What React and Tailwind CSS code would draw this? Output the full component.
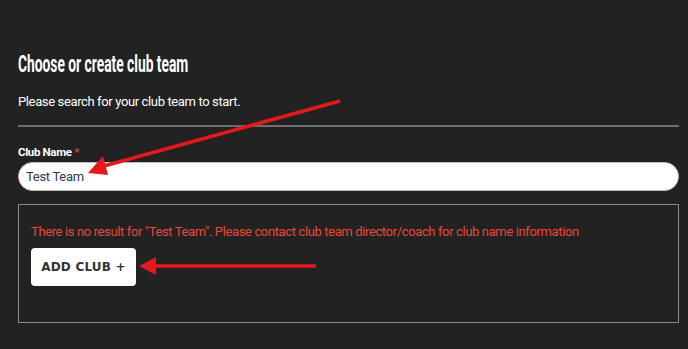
export default function App() {
  return (
    <div className="relative w-full h-[349px] bg-[#222222] overflow-hidden pl-[18px] pr-[9px] pt-[53px]" style={{ fontFamily: "Roboto, 'Liberation Sans', sans-serif" }}>
      <h2 className="h-[24px]">
        <span className="inline-block origin-left scale-x-[0.6] text-[23px] leading-[24px] font-bold text-white whitespace-nowrap" style={{ fontFamily: "Roboto, 'Liberation Sans', sans-serif" }}>
          Choose or create club team
        </span>
      </h2>
      <p className="mt-[15px] text-[13px] leading-[20px] tracking-[-0.37px] text-white">Please search for your club team to start.</p>
      <div className="mt-[13px] h-[2px] bg-[#6f6f6f]" />
      <label className="block mt-[17px] text-[11.5px] leading-[16px] font-bold tracking-[-0.35px] text-white">
        Club Name <span className="text-[#e0412f]">*</span>
      </label>
      <div className="mt-[2px] h-[29px] rounded-full bg-white border border-[#bdbdbd] flex items-center px-[7px]">
        <span className="text-[13px] tracking-[-0.3px] text-[#2b3a55]">Test Team</span>
      </div>
      <div className="mt-[13px] h-[119px] border border-[#8a8a8a] px-[12px] pt-[18px]">
        <p className="text-[13px] leading-[18px] tracking-[-0.37px] text-[#e8483a] whitespace-nowrap">
          There is no result for "Test Team". Please contact club team director/coach for club name information
        </p>
        <button className="mt-[7px] w-[105px] h-[38px] rounded-[4px] bg-white text-[#333333] text-[12px] font-bold tracking-[0.2px] flex items-center justify-center" style={{ fontFamily: "'DejaVu Sans', sans-serif" }}>
          ADD CLUB +
        </button>
      </div>
      <svg className="absolute inset-0 pointer-events-none" width="688" height="349" viewBox="0 0 688 349">
        <line x1="340" y1="101" x2="104" y2="166" stroke="#e3191b" strokeWidth="3.5" strokeLinecap="butt" />
        <polygon points="88,173 103,156 108,175" fill="#e3191b" />
        <line x1="316" y1="266" x2="152" y2="266" stroke="#e3191b" strokeWidth="3.5" />
        <polygon points="139,266 156,257 156,275" fill="#e3191b" />
      </svg>
    </div>
  );
}
